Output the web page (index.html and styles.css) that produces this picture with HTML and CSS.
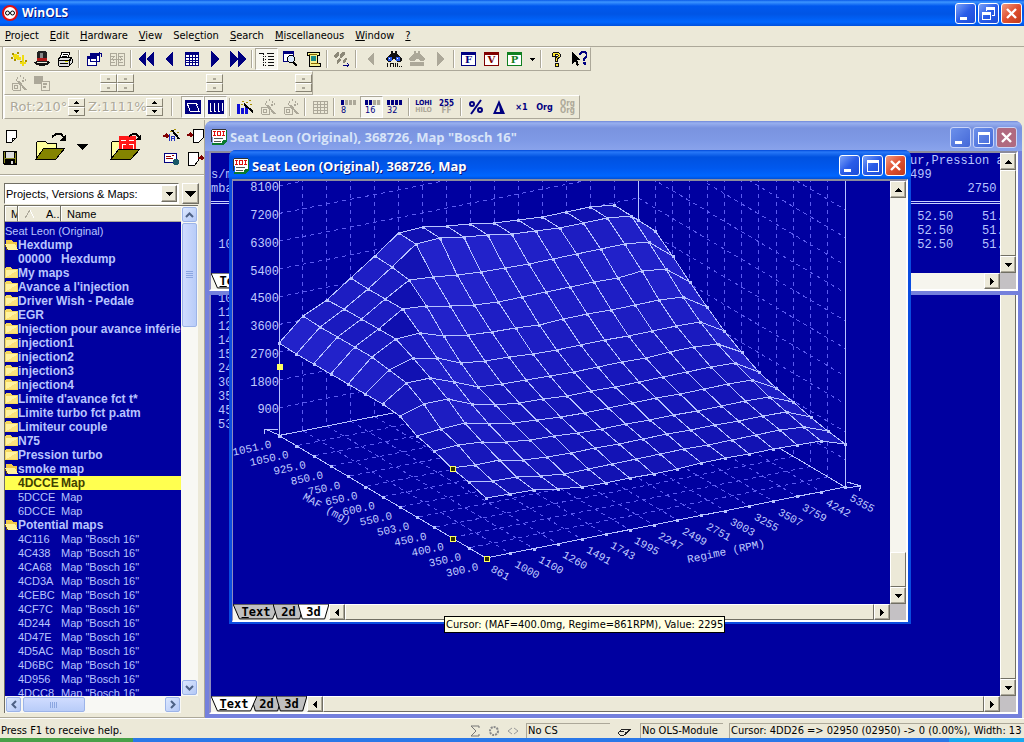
FILE: index.html
```html
<!DOCTYPE html>
<html lang="en">
<head>
    <meta charset="UTF-8">
    <meta name="viewport" content="width=device-width, initial-scale=1.0">
    <title>WinOLS</title>
    <link rel="stylesheet" href="styles.css">
</head>
<body>
    <!-- Icon sprites -->
    <svg class="sprites" aria-hidden="true">
        <symbol id="up" viewBox="0 0 7 4"><path d="M3 0h1v1h1v1h1v1h1v1H0V3h1V2h1V1h1z"/></symbol>
        <symbol id="down" viewBox="0 0 7 4"><path d="M0 0h7v1H6v1H5v1H4v1H3V3H2V2H1V1H0z"/></symbol>
        <symbol id="down-big" viewBox="0 0 11 6"><path d="M0 0h11v1h-1v1H9v1H8v1H7v1H6v1H5V5H4V4H3V3H2V2H1V1H0z"/></symbol>
        <symbol id="left" viewBox="0 0 4 7"><path d="M4 0v7H3V6H2V5H1V4H0V3h1V2h1V1h1V0z"/></symbol>
        <symbol id="right" viewBox="0 0 4 7"><path d="M0 0v7h1V6h1V5h1V4h1V3H3V2H2V1H1V0z"/></symbol>
        <symbol id="chev-up" viewBox="0 0 9 6"><path d="M1 5l3.500-3.500L8 5" fill="none" stroke="#4d6185" stroke-width="2"/></symbol>
        <symbol id="chev-down" viewBox="0 0 9 6"><path d="M1 1l3.500 3.500L8 1" fill="none" stroke="#4d6185" stroke-width="2"/></symbol>
        <symbol id="chev-left" viewBox="0 0 6 9"><path d="M5 1L1.500 4.500L5 8" fill="none" stroke="#4d6185" stroke-width="2"/></symbol>
        <symbol id="chev-right" viewBox="0 0 6 9"><path d="M1 1l3.500 3.500L1 8" fill="none" stroke="#4d6185" stroke-width="2"/></symbol>
        <symbol id="folder" viewBox="0 0 13 13">
            <path d="M0 3l1-2h5l1 2h6v9H0z" fill="#f4d860"/>
            <path d="M1 4h11v7H1z" fill="#fff3a0"/>
            <path d="M1 11L12 5v6z" fill="#fbe27c"/>
        </symbol>
        <symbol id="folder-open" viewBox="0 0 13 13">
            <path d="M1 12V2h6l1 2h4v8z" fill="#f0c848"/>
            <path d="M0 6h10l3 6H3z" fill="#fff29a"/>
            <path d="M0 6l3 6H1z" fill="#6a5010"/>
        </symbol>
        <symbol id="doc" viewBox="0 0 16 16">
            <path d="M1 1h14v11l-3 3H2z" fill="#fff"/>
            <path d="M1 0h14v1H1zM0 1h1v12H0z" fill="#333"/>
            <path d="M15 1h1v11l-4 4H1v-2h10l1-3h3z" fill="#0a7a30"/>
            <path d="M2 2h3v1H4v3h1v1H2V6h1V3H2zM6 2h4v5H6zM7 3v3h2V3zM11 2h3v1h-1v3h1v1h-3V6h1V3h-1z" fill="#e01010" fill-rule="evenodd"/>
            <path d="M3 9h9v1H3zM3 12h7v1H3z" fill="#555"/>
        </symbol>
        <symbol id="min" viewBox="0 0 19 19"><path d="M4 13h7v3H4z" fill="#fff"/></symbol>
        <symbol id="max" viewBox="0 0 19 19"><path d="M4 4h12v12H4zM5 7v8h10V7z" fill="#fff" fill-rule="evenodd"/></symbol>
        <symbol id="restore" viewBox="0 0 19 19"><path d="M7 3h9v9h-3v-1h2V6H8v1H7zM3 8h9v8H3zM4 11v4h7v-4z" fill="#fff" fill-rule="evenodd"/></symbol>
        <symbol id="close" viewBox="0 0 19 19"><path d="M5 5l9 9M14 5l-9 9" stroke="#fff" stroke-width="2.400"/></symbol>
        <symbol id="tab-shape" viewBox="0 0 100 15" preserveAspectRatio="none">
            <path d="M0 0L14 14H86L100 0z" fill="currentColor" stroke="#000" vector-effect="non-scaling-stroke"/>
        </symbol>

        <symbol id="import" viewBox="0 0 16 16">
            <path d="M1 2h2v2H1zM6 1h2v2H6zM0 6h2v2H0zM7 6h2v2H7zM3 8h2v2H3zM9 10h2v2H9zM14 9h2v2h-2z" fill="#a89000"/>
            <path d="M3 3h3v5H3zM2 4h6v2H2zM6 6h4v3H6zM11 4h2v11h-2zM9 11h6v2H9z" fill="#f0dc10"/>
        </symbol>
        <symbol id="hat" viewBox="0 0 16 16">
            <path d="M3 1l2-1h6l2 1v10H3z" fill="#222"/><path d="M6 2h3v5H6z" fill="#888"/>
            <path d="M3 7h10v3H3z" fill="#b01818"/><path d="M0 11l3-1v2h10v-2l3 1-2 3-6 1-6-1z" fill="#111"/>
        </symbol>
        <symbol id="print" viewBox="0 0 16 16">
            <path d="M5 1h8l-2 6H3z" fill="#fff" stroke="#000"/><path d="M6 3h5M5 5h5" stroke="#000"/>
            <path d="M1 8l3-2h10l1 2v4l-3 3H2l-1-2z" fill="#ddd" stroke="#000"/><path d="M1 9h11M3 12h8M12 14V9l3-2" stroke="#000"/><path d="M8 10h3v1H8z" fill="#dd0"/>
        </symbol>
        <symbol id="windows" viewBox="0 0 16 16">
            <path d="M4 3h9v7H4zM1 6h9v8H1z" fill="#fff" stroke="#000080"/><path d="M4 2h9v3H4zM1 5h10v3H1z" fill="#000080"/>
            <path d="M11 2h4v4M15 3l-2-2" fill="none" stroke="#000080"/>
        </symbol>
        <symbol id="compare" viewBox="0 0 16 16">
            <path d="M1 2h6v12H1zM9 2h6v12H9z" fill="none" stroke="#aca899"/><path d="M2 5h4M2 8h12M10 5h4M2 11h4M10 11h4M5 6l-2 2 2 2M11 6l2 2-2 2" fill="none" stroke="#aca899"/>
        </symbol>
        <symbol id="rewind" viewBox="0 0 16 16"><path d="M8 0v16L0 8zM16 0v16L8 8z" fill="#000080"/></symbol>
        <symbol id="back" viewBox="0 0 16 16"><path d="M12 0v16L4 8z" fill="#000080"/></symbol>
        <symbol id="grid" viewBox="0 0 16 16"><path d="M1 1h14v14H1z" fill="#000080"/><path d="M2 4h3v2H2zM6 4h2v2H6zM9 4h2v2H9zM12 4h2v2h-2zM2 7h3v2H2zM6 7h2v2H6zM9 7h2v2H9zM12 7h2v2h-2zM2 10h3v1H2zM6 10h2v1H6zM9 10h2v1H9zM12 10h2v1h-2zM2 12h3v2H2zM6 12h2v2H6zM9 12h2v2H9zM12 12h2v2h-2z" fill="#fff"/></symbol>
        <symbol id="next" viewBox="0 0 16 16"><path d="M4 0v16l8-8z" fill="#000080"/></symbol>
        <symbol id="forward" viewBox="0 0 16 16"><path d="M0 0v16l8-8zM8 0v16l8-8z" fill="#000080"/></symbol>
        <symbol id="treeview" viewBox="0 0 16 16"><path d="M0 2h5M8 2h7M9 5h6M9 8h6M9 11h6M9 14h6" stroke="#111"/><path d="M4 3v12M4 5h4M4 8h4M4 11h4M4 14h4" stroke="#111" stroke-dasharray="1 1"/></symbol>
        <symbol id="search-map" viewBox="0 0 16 16">
            <path d="M1 1h10v9H1z" fill="#fff" stroke="#000080"/><path d="M1 0h11v3H1z" fill="#000080"/>
            <circle cx="9" cy="8" r="3.500" fill="#d8e8ff" stroke="#000"/><path d="M11 11l4 4" stroke="#000" stroke-width="2"/>
        </symbol>
        <symbol id="scroll" viewBox="0 0 16 16">
            <path d="M2 1h12v3h-2v8h3v3H4v-3l1-8H2z" fill="#f4f090" stroke="#000"/><path d="M6 5h5v5H6z" fill="#188888"/><path d="M6 12h8M4 3h8" stroke="#886600"/>
        </symbol>
        <symbol id="steps" viewBox="0 0 16 16">
            <path d="M0 5l3-4h2v3L3 7H1zM6 4l2-3h3v2L8 7H6zM3 9l3-2 1 2-3 4H3zM9 9l3-3 1 2-2 4H9z" fill="#8c8878"/><path d="M9 14h6M13 12l2 2-2 2" fill="none" stroke="#000080"/>
        </symbol>
        <symbol id="prev-off" viewBox="0 0 16 16"><path d="M11 1v14L4 8z" fill="#aca899"/></symbol>
        <symbol id="next-off" viewBox="0 0 16 16"><path d="M5 1v14l7-7z" fill="#aca899"/></symbol>
        <symbol id="binoc" viewBox="0 0 16 16">
            <path d="M5 0h2v2h2V0h2v3l5 4v2l-2 2h-3L9 8H7l-2 3H2L0 9V7l5-4z" fill="#111"/><circle cx="4" cy="8" r="2.500" fill="#2858e8"/><circle cx="12" cy="8" r="2.500" fill="#2858e8"/>
            <path d="M3 7h1M11 7h1" stroke="#fff"/><path d="M1 12v4M4 12v4M4 12h3v4H4M9 12v4M11 12v4M13 15h1M15 15h1" fill="none" stroke="#111"/>
        </symbol>
        <symbol id="binoc-off" viewBox="0 0 16 16"><path d="M5 0h2v2h2V0h2v3l5 4v2l-2 1h-3L9 8H7l-2 2H2L0 9V7l5-4zM1 11h14v4H1z" fill="#aca899"/></symbol>
        <symbol id="help" viewBox="0 0 16 16"><path d="M4 5V3l2-2h4l2 2v3L9 8v2H7V7l3-2V4L9 3H7v2zM7 12h3v3H7z" fill="#ffe830" stroke="#111"/></symbol>
        <symbol id="whats" viewBox="0 0 16 16"><path d="M1 1v12l3-3 2 5 2-1-2-5h4z" fill="#000"/><path d="M9 4V3l2-2h3l2 2v2l-3 3v2M12 12h2v2" fill="none" stroke="#000080" stroke-width="2"/></symbol>
        <symbol id="wand-off" viewBox="0 0 16 16"><path d="M7 6l8 9" stroke="#aca899" stroke-width="2"/><path d="M6 3h1M9 1h1M12 3h1M14 5h1M5 5h1M11 6h2" fill="none" stroke="#aca899" stroke-width="2"/><path d="M1 8h6l2 2v5H2l-1-2zM3 10h3v3H3z" fill="none" stroke="#aca899"/></symbol>
        <symbol id="layers-off" viewBox="0 0 16 16"><path d="M0 1h9v8H0z" fill="#aca899"/><path d="M7 6h8v9H7z" fill="#ece9d8" stroke="#aca899"/><path d="M9 9h4M9 12h3" stroke="#aca899" stroke-width="2"/></symbol>
        <symbol id="view3d" viewBox="0 0 16 16"><path d="M0 1h16v14H0z" fill="#000080"/><path d="M2 4h9l3 8H5zM2 6h2M11 4l2 2" fill="none" stroke="#fff"/></symbol>
        <symbol id="view2d" viewBox="0 0 16 16"><path d="M0 1h16v14H0z" fill="#000080"/><path d="M2 4v8h2M6 4v8h2M10 4v8h2M14 4v8" fill="none" stroke="#fff"/></symbol>
        <symbol id="bars-wand" viewBox="0 0 16 16"><path d="M0 5h3v10H0zM4 9h3v6H4zM8 7h3v8H8z" fill="#1010d8"/><path d="M7 5l9 8" stroke="#000" stroke-width="2"/><path d="M5 2h2M9 3h2M12 1h2M13 5h2M4 5h2" stroke="#a89000"/></symbol>
        <symbol id="grid-off" viewBox="0 0 16 16"><path d="M1 2h14v12H1zM1 5h14M1 8h14M1 11h14M5 2v12M8 2v12M12 2v12" fill="none" stroke="#aca899"/></symbol>
        <symbol id="delta" viewBox="0 0 16 16"><path d="M8 1l6 14H2zM8 6l-3 7h4z" fill="#000080" fill-rule="evenodd"/></symbol>
        <symbol id="percent" viewBox="0 0 16 16"><path d="M13 1L3 15" stroke="#000080" stroke-width="2"/><circle cx="4" cy="5" r="2" fill="none" stroke="#000080" stroke-width="2"/><circle cx="12" cy="11" r="2" fill="none" stroke="#000080" stroke-width="2"/></symbol>

        <symbol id="new" viewBox="0 0 12 14"><path d="M1 1h10v8l-4 4H1z" fill="#fff" stroke="#000"/><path d="M11 9H7v4" fill="none" stroke="#000"/></symbol>
        <symbol id="save" viewBox="0 0 14 14"><path d="M0 0h14v14H1L0 13z" fill="#000"/><path d="M1 1h1v11H1zM12 2h1v10h-1zM2 7h10v1H2z" fill="#8a8a20"/><path d="M3 1h8v6H3zM8 10h2v3H8z" fill="#ddd"/></symbol>
        <symbol id="open" viewBox="0 0 32 30">
            <path d="M1 27V11l2-2h7l2 2h9v6" fill="#ffff9c" stroke="#000"/><path d="M1 27l8-11h21l-9 11z" fill="#848400" stroke="#000"/>
            <path d="M17 5l4-3h5l4 5" fill="none" stroke="#000" stroke-width="2"/><path d="M31 2v7h-7z" fill="#000"/>
        </symbol>
        <symbol id="open-chip" viewBox="0 0 32 30">
            <path d="M1 27V11l2-2h6v4" fill="#ffff9c" stroke="#000"/><path d="M9 4h17v15H9z" fill="#ff1818"/>
            <path d="M11 8h5M19 8h5M12 17v-5h4M19 12h4v5" fill="none" stroke="#fff"/>
            <path d="M1 27l8-10h21l-9 10z" fill="#848400" stroke="#000"/>
            <path d="M19 4l4-2h3l4 4" fill="none" stroke="#000" stroke-width="2"/><path d="M31 2v6h-6z" fill="#000"/>
        </symbol>
        <symbol id="wizard" viewBox="0 0 17 15"><path d="M0 8h4M3 6l2 2-2 2" fill="none" stroke="#800000" stroke-width="2"/><path d="M6 6v7M8 13V8h3v5M8 10h3" fill="none" stroke="#2030c0"/><path d="M9 2l7 9" stroke="#000" stroke-width="2"/><path d="M7 3h2M11 1h2M14 4h2" stroke="#a89000"/></symbol>
        <symbol id="doc-in" viewBox="0 0 17 15"><path d="M6 1h10v9l-4 4H6z" fill="#fff" stroke="#000"/><path d="M0 7h5M3 5l2 2-2 2" fill="none" stroke="#800000" stroke-width="2"/></symbol>
        <symbol id="send" viewBox="0 0 17 15"><path d="M1 2h12v9H1z" fill="#fff" stroke="#000080"/><path d="M3 5h5M3 7h7M9 4h2" stroke="#900"/><circle cx="13" cy="11" r="3" fill="#185868"/></symbol>
        <symbol id="doc-out" viewBox="0 0 17 15"><path d="M1 1h10v9l-3 4H1z" fill="#fff" stroke="#000"/><path d="M11 7h5M14 5l2 2-2 2" fill="none" stroke="#800000" stroke-width="2"/></symbol>
    </svg>

    <header class="titlebar">
        <svg class="app-icon" viewBox="0 0 16 16"><circle cx="8" cy="8" r="7" fill="#fff" stroke="#e01010" stroke-width="2"/><circle cx="5.500" cy="8" r="2" fill="none" stroke="#000"/><circle cx="10.500" cy="8" r="2" fill="none" stroke="#000"/></svg>
        <h1>WinOLS</h1>
        <button class="cap" aria-label="Minimize"><svg><use href="#min"/></svg></button>
        <button class="cap" aria-label="Restore"><svg><use href="#restore"/></svg></button>
        <button class="cap red" aria-label="Close"><svg><use href="#close"/></svg></button>
    </header>

    <nav class="menu">
        <a href="#"><u>P</u>roject</a>
        <a href="#"><u>E</u>dit</a>
        <a href="#"><u>H</u>ardware</a>
        <a href="#"><u>V</u>iew</a>
        <a href="#">Sele<u>c</u>tion</a>
        <a href="#"><u>S</u>earch</a>
        <a href="#"><u>M</u>iscellaneous</a>
        <a href="#"><u>W</u>indow</a>
        <a href="#"><u>?</u></a>
    </nav>

    <div class="toolbar">
        <button aria-label="Import"><svg><use href="#import"/></svg></button>
        <button aria-label="Magic"><svg><use href="#hat"/></svg></button>
        <button aria-label="Print"><svg><use href="#print"/></svg></button>
        <i class="sep"></i>
        <button aria-label="Windows"><svg><use href="#windows"/></svg></button>
        <button aria-label="Compare" disabled><svg><use href="#compare"/></svg></button>
        <i class="sep"></i>
        <button aria-label="First"><svg><use href="#rewind"/></svg></button>
        <button aria-label="Previous"><svg><use href="#back"/></svg></button>
        <button aria-label="Map list"><svg><use href="#grid"/></svg></button>
        <button aria-label="Next"><svg><use href="#next"/></svg></button>
        <button aria-label="Last"><svg><use href="#forward"/></svg></button>
        <i class="sep"></i>
        <button class="pressed" aria-label="Tree"><svg><use href="#treeview"/></svg></button>
        <button aria-label="Overview"><svg><use href="#search-map"/></svg></button>
        <button aria-label="Script"><svg><use href="#scroll"/></svg></button>
        <i class="sep"></i>
        <button aria-label="Steps"><svg><use href="#steps"/></svg></button>
        <i class="sep"></i>
        <button aria-label="Find previous" disabled><svg><use href="#prev-off"/></svg></button>
        <button aria-label="Find"><svg><use href="#binoc"/></svg></button>
        <button aria-label="Find again" disabled><svg><use href="#binoc-off"/></svg></button>
        <button aria-label="Find next" disabled><svg><use href="#next-off"/></svg></button>
        <i class="sep"></i>
        <button><span class="letter">F</span></button>
        <button><span class="letter maroon">V</span></button>
        <button><span class="letter green">P</span></button>
        <button class="narrow" aria-label="More"><svg class="arrow-sm"><use href="#down"/></svg></button>
        <i class="sep"></i>
        <button aria-label="Help"><svg><use href="#help"/></svg></button>
        <button aria-label="What's this"><svg><use href="#whats"/></svg></button>
    </div>

    <div class="toolbar">
        <button aria-label="Edit map" disabled><svg><use href="#wand-off"/></svg></button>
        <button aria-label="Copy map" disabled><svg><use href="#layers-off"/></svg></button>
        <span class="blank"></span>
        <span class="spin off"><button aria-label="Up" disabled></button><button aria-label="Down" disabled></button></span>
        <span class="spin off"><button aria-label="Up" disabled></button><button aria-label="Down" disabled></button></span>
        <span class="blank wide"></span>
        <span class="spin off"><button aria-label="Up" disabled></button><button aria-label="Down" disabled></button></span>
        <span class="blank wide"></span>
        <span class="spin off"><button aria-label="Up" disabled></button><button aria-label="Down" disabled></button></span>
    </div>

    <div class="toolbar last">
        <span class="readout">Rot:210°</span>
        <span class="spin"><button aria-label="Rotate up"><svg><use href="#up"/></svg></button><button aria-label="Rotate down"><svg><use href="#down"/></svg></button></span>
        <span class="readout">Z:1111%</span>
        <span class="spin"><button aria-label="Zoom in"><svg><use href="#up"/></svg></button><button aria-label="Zoom out"><svg><use href="#down"/></svg></button></span>
        <i class="sep big"></i>
        <button class="pressed" aria-label="3d"><svg><use href="#view3d"/></svg></button>
        <button class="pressed" aria-label="2d"><svg><use href="#view2d"/></svg></button>
        <i class="sep"></i>
        <button aria-label="Map wizard"><svg><use href="#bars-wand"/></svg></button>
        <button aria-label="Wizard" disabled><svg><use href="#wand-off"/></svg></button>
        <button aria-label="Wizard" disabled><svg><use href="#wand-off"/></svg></button>
        <i class="sep"></i>
        <button aria-label="Grid" disabled><svg><use href="#grid-off"/></svg></button>
        <i class="sep"></i>
        <button class="bits"><i class="b1"></i>8</button>
        <button class="bits pressed"><i class="b2"></i>16</button>
        <button class="bits"><i class="b4"></i>32</button>
        <i class="sep"></i>
        <button class="stack"><b>LOHI</b><b class="dim">HILO</b></button>
        <button class="stack num"><b>255</b><b class="dim">FF</b></button>
        <i class="sep"></i>
        <button aria-label="Percent"><svg class="smooth"><use href="#percent"/></svg></button>
        <button aria-label="Difference"><svg class="smooth"><use href="#delta"/></svg></button>
        <button class="word">×1</button>
        <button class="word">Org</button>
        <button class="stack off"><b class="dim">Org</b><b class="dim">Org</b></button>
    </div>

    <main>
        <aside>
            <div class="actions">
                <div class="pair">
                    <button aria-label="New"><svg class="i-new"><use href="#new"/></svg></button>
                    <button aria-label="Save"><svg class="i-save"><use href="#save"/></svg></button>
                </div>
                <button class="big" aria-label="Open"><svg><use href="#open"/></svg></button>
                <button class="big-arrow" aria-label="Recent"><svg><use href="#down-big"/></svg></button>
                <button class="big" aria-label="Open from chip"><svg><use href="#open-chip"/></svg></button>
                <div class="quad">
                    <button aria-label="Wizard"><svg><use href="#wizard"/></svg></button>
                    <button aria-label="Import file"><svg><use href="#doc-in"/></svg></button>
                    <button aria-label="Send"><svg><use href="#send"/></svg></button>
                    <button aria-label="Export file"><svg><use href="#doc-out"/></svg></button>
                </div>
            </div>

            <div class="filter">
                <div class="combo">
                    <select aria-label="Show"><option>Projects, Versions &amp; Maps:</option></select>
                    <span class="raised"><svg><use href="#down"/></svg></span>
                </div>
                <button class="raised more" aria-label="Options"><svg><use href="#down-big"/></svg></button>
            </div>

            <div class="browser">
                <div class="list">
                    <div class="head"><span class="c1">M</span><span class="c2"><svg viewBox="0 0 9 8"><path d="M0 8L5 0" stroke="#aca899" fill="none"/><path d="M5 0l4 8H0" stroke="#fff" fill="none"/></svg>A..</span><span class="c3">Name</span></div>
                    <ul class="tree">
                        <li class="root">Seat Leon (Original)</li>
                        <li class="dir"><svg><use href="#folder-open"/></svg>Hexdump</li>
                        <li class="item bold"><span>00000</span>Hexdump</li>
                        <li class="dir"><svg><use href="#folder"/></svg>My maps</li>
                        <li class="dir"><svg><use href="#folder"/></svg>Avance a l'injection</li>
                        <li class="dir"><svg><use href="#folder"/></svg>Driver Wish - Pedale</li>
                        <li class="dir"><svg><use href="#folder"/></svg>EGR</li>
                        <li class="dir"><svg><use href="#folder"/></svg>Injection pour avance inférie</li>
                        <li class="dir"><svg><use href="#folder"/></svg>injection1</li>
                        <li class="dir"><svg><use href="#folder"/></svg>injection2</li>
                        <li class="dir"><svg><use href="#folder"/></svg>injection3</li>
                        <li class="dir"><svg><use href="#folder"/></svg>injection4</li>
                        <li class="dir"><svg><use href="#folder"/></svg>Limite d'avance fct t*</li>
                        <li class="dir"><svg><use href="#folder"/></svg>Limite turbo fct p.atm</li>
                        <li class="dir"><svg><use href="#folder"/></svg>Limiteur couple</li>
                        <li class="dir"><svg><use href="#folder"/></svg>N75</li>
                        <li class="dir"><svg><use href="#folder"/></svg>Pression turbo</li>
                        <li class="dir"><svg><use href="#folder-open"/></svg>smoke map</li>
                        <li class="item bold selected"><span>4DCCE</span>Map</li>
                        <li class="item"><span>5DCCE</span>Map</li>
                        <li class="item"><span>6DCCE</span>Map</li>
                        <li class="dir"><svg><use href="#folder-open"/></svg>Potential maps</li>
                        <li class="item"><span>4C116</span>Map "Bosch 16"</li>
                        <li class="item"><span>4C438</span>Map "Bosch 16"</li>
                        <li class="item"><span>4CA68</span>Map "Bosch 16"</li>
                        <li class="item"><span>4CD3A</span>Map "Bosch 16"</li>
                        <li class="item"><span>4CEBC</span>Map "Bosch 16"</li>
                        <li class="item"><span>4CF7C</span>Map "Bosch 16"</li>
                        <li class="item"><span>4D244</span>Map "Bosch 16"</li>
                        <li class="item"><span>4D47E</span>Map "Bosch 16"</li>
                        <li class="item"><span>4D5AC</span>Map "Bosch 16"</li>
                        <li class="item"><span>4D6BC</span>Map "Bosch 16"</li>
                        <li class="item"><span>4D956</span>Map "Bosch 16"</li>
                        <li class="item"><span>4DCC8</span>Map "Bosch 16"</li>
                    </ul>
                </div>
                <div class="xp-v">
                    <button aria-label="Scroll up"><svg><use href="#chev-up"/></svg></button>
                    <div class="thumb"></div>
                    <button class="end" aria-label="Scroll down"><svg><use href="#chev-down"/></svg></button>
                </div>
                <div class="xp-h">
                    <button aria-label="Scroll left"><svg><use href="#chev-left"/></svg></button>
                    <div class="thumb"></div>
                    <button class="end" aria-label="Scroll right"><svg><use href="#chev-right"/></svg></button>
                </div>
            </div>
        </aside>

        <section class="desktop">
            <div class="window win-hex">
                <div class="body">
                    <pre class="view">10
11
12
14
15
24
30
35
45
53</pre>
                    <div class="vscroll">
                        <div class="thumb fill"></div>
                        <button class="raised" aria-label="Scroll down"><svg><use href="#down"/></svg></button>
                    </div>
                    <div class="tabs">
                        <button class="tab text on"><svg><use href="#tab-shape"/></svg><span><u>T</u>ext</span></button>
                        <button class="tab"><svg><use href="#tab-shape"/></svg><span>2d</span></button>
                        <button class="tab"><svg><use href="#tab-shape"/></svg><span>3d</span></button>
                        <button class="raised arrow" aria-label="Scroll left"><svg class="side"><use href="#left"/></svg></button>
                        <div class="thumb"></div>
                        <button class="raised arrow" aria-label="Scroll right"><svg class="side"><use href="#right"/></svg></button>
                    </div>
                    <div class="corner"></div>
                </div>
            </div>

            <div class="window win-bosch">
                <div class="caption">
                    <svg class="doc"><use href="#doc"/></svg>
                    <h2>Seat Leon (Original), 368726, Map "Bosch 16"</h2>
                    <button class="cap" aria-label="Minimize"><svg><use href="#min"/></svg></button>
                    <button class="cap" aria-label="Maximize"><svg><use href="#max"/></svg></button>
                    <button class="cap red" aria-label="Close"><svg><use href="#close"/></svg></button>
                </div>
                <div class="body">
                    <div class="view split">
<pre>
s/min
mbar

   7
   9
 10</pre>
<pre>ur,Pression at
499
        2750

 52.50    51.
 52.50    51.
 52.50    51.</pre>
                    </div>
                    <div class="vscroll">
                        <button class="raised" aria-label="Scroll up"><svg><use href="#up"/></svg></button>
                        <div class="thumb fill"></div>
                        <button class="raised" aria-label="Scroll down"><svg><use href="#down"/></svg></button>
                    </div>
                    <div class="tabs">
                        <button class="tab text on"><svg><use href="#tab-shape"/></svg><span><u>T</u>ext</span></button>
                        <div class="track"></div>
                        <button class="raised arrow" aria-label="Scroll right"><svg class="side"><use href="#right"/></svg></button>
                    </div>
                    <div class="corner"></div>
                </div>
            </div>

            <div class="window win-map active">
                <div class="caption">
                    <svg class="doc"><use href="#doc"/></svg>
                    <h2>Seat Leon (Original), 368726, Map</h2>
                    <button class="cap" aria-label="Minimize"><svg><use href="#min"/></svg></button>
                    <button class="cap" aria-label="Maximize"><svg><use href="#max"/></svg></button>
                    <button class="cap red" aria-label="Close"><svg><use href="#close"/></svg></button>
                </div>
                <div class="body">
                    <svg class="view plot" id="plot" viewBox="233 181 657 423" preserveAspectRatio="xMinYMin slice"></svg>
                    <div class="vscroll">
                        <button class="raised" aria-label="Scroll up"><svg><use href="#up"/></svg></button>
                        <div class="track"></div>
                        <div class="thumb"></div>
                        <button class="raised" aria-label="Scroll down"><svg><use href="#down"/></svg></button>
                    </div>
                    <div class="tabs">
                        <button class="tab text"><svg><use href="#tab-shape"/></svg><span><u>T</u>ext</span></button>
                        <button class="tab"><svg><use href="#tab-shape"/></svg><span>2d</span></button>
                        <button class="tab on"><svg><use href="#tab-shape"/></svg><span>3d</span></button>
                        <button class="raised arrow" aria-label="Scroll left"><svg class="side"><use href="#left"/></svg></button>
                        <div class="thumb"></div>
                        <button class="raised arrow" aria-label="Scroll right"><svg class="side"><use href="#right"/></svg></button>
                    </div>
                    <div class="corner"></div>
                </div>
            </div>

            <div class="tooltip">Cursor: (MAF=400.0mg, Regime=861RPM), Value: 2295</div>
        </section>
    </main>

    <footer class="status">
        <span class="msg">Press F1 to receive help.</span>
        <svg class="st" viewBox="0 0 12 12"><path d="M10 3V1H2l5 5-5 5h8V9" fill="none" stroke="#777"/></svg>
        <svg class="st" viewBox="0 0 12 12"><circle cx="6" cy="6" r="4" fill="none" stroke="#888" stroke-width="2" stroke-dasharray="2 1"/></svg>
        <svg class="st" viewBox="0 0 12 12"><path d="M5 3L1 6l4 3M7 3l4 3-4 3" fill="none" stroke="#999"/></svg>
        <span class="pane cs">No CS</span>
        <svg class="hand" viewBox="0 0 16 12"><path d="M1 8l4-4h9l-3 3h-3l2 1-3 2H3zM5 4l-2 2h4M10 7l4-3" fill="none" stroke="#222"/></svg>
        <span class="pane ols">No OLS-Module</span>
        <span class="pane cursor">Cursor: 4DD26 =&gt; 02950 (02950) -&gt; 0 (0.00%), Width: 13</span>
    </footer>
    <div class="taskbar"><i></i><b></b></div>

    <script>
        // Axis labels
        const maf = ['300.0', '350.0', '400.0', '450.0', '503.0', '550.0', '600.0', '650.0', '750.0', '850.0', '925.0', '1050.0', '1051.0'];
        const rpm = [861, 1000, 1100, 1260, 1491, 1743, 1995, 2247, 2499, 2751, 3003, 3255, 3507, 3759, 4242, 5355];

        // Projected height of the surface, one row for each MAF step, front row first
        const surface = [
            [498, 494, 490, 489, 487, 483, 478, 474, 469, 463, 458, 454, 449, 445, 441, 444],
            [482, 481, 477, 476, 474, 469, 464, 459, 454, 449, 445, 440, 435, 430, 427, 431],
            [468, 465, 460, 460, 457, 453, 448, 444, 439, 434, 430, 425, 421, 416, 412, 417],
            [451, 445, 442, 442, 440, 436, 433, 429, 424, 420, 415, 411, 406, 401, 397, 402],
            [436, 429, 423, 424, 423, 420, 417, 413, 408, 403, 398, 394, 389, 384, 380, 388],
            [416, 404, 399, 404, 405, 403, 399, 396, 391, 387, 382, 377, 372, 367, 363, 372],
            [404, 383, 378, 382, 387, 384, 380, 376, 372, 367, 362, 358, 352, 347, 344, 352],
            [394, 370, 358, 358, 363, 361, 357, 354, 350, 345, 340, 336, 331, 326, 322, 331],
            [384, 357, 339, 333, 336, 335, 332, 328, 325, 319, 314, 310, 305, 300, 297, 307],
            [374, 347, 329, 309, 306, 306, 305, 302, 297, 292, 287, 282, 278, 271, 269, 282],
            [364, 337, 319, 299, 280, 277, 275, 272, 268, 264, 259, 254, 249, 244, 242, 256],
            [354, 327, 309, 289, 267, 244, 238, 237, 235, 234, 231, 228, 223, 218, 216, 231],
            [343, 316, 300, 278, 256, 233, 227, 226, 224, 223, 220, 217, 212, 207, 205, 220]
        ];

        const plot = document.getElementById('plot');
        const I = rpm.length - 1;
        const J = maf.length - 1;
        const level = 27.75; // height of 900 units

        function floorPoint(i, j) {
            return [486 + i * 359 / I - j * 207 / J, 558 - i * 71 / I - j * 122.5 / J];
        }

        function surfacePoint(i, j) {
            return [floorPoint(i, j)[0], surface[j][i]];
        }

        function add(name, attrs, text) {
            const el = document.createElementNS('http://www.w3.org/2000/svg', name);
            for (const key in attrs) el.setAttribute(key, attrs[key]);
            if (text !== undefined) el.textContent = text;
            plot.appendChild(el);
        }

        function line(a, b, cls) {
            add('path', { d: 'M' + a + 'L' + b, class: cls });
        }

        function dot(p, cls) {
            const r = cls ? 2 : 1;
            add('rect', { x: Math.round(p[0]) - r, y: Math.round(p[1]) - r, width: 2 * r + 1, height: 2 * r + 1, class: cls || 'dot' });
        }

        // Walls and floor
        const left = floorPoint(0, J), back = floorPoint(I, J), right = floorPoint(I, 0), front = floorPoint(0, 0);
        for (let i = 1; i < I; i++) {
            const p = floorPoint(i, J);
            line([p[0], 170], p, 'dash');
            line(p, floorPoint(i, 0), 'dash');
        }
        for (let j = 1; j < J; j++) {
            const p = floorPoint(I, j);
            line([p[0], 170], p, 'dash');
            line(p, floorPoint(0, j), 'dash');
        }
        for (let k = 1; k < 13; k++) {
            line([left[0], left[1] - k * level], [back[0], back[1] - k * level], 'dash');
            line([back[0], back[1] - k * level], [right[0], right[1] - k * level], 'dash');
            if (k < 10) {
                add('text', { x: 279, y: 441 - k * level, class: 'scale' }, k * 900);
            }
        }
        line([left[0], 170], left, 'line');
        line([back[0], 170], back, 'line');
        line([right[0], 170], right, 'line');
        line(left, back, 'line');
        line(back, right, 'line');
        line(front, left, 'line');
        line(front, right, 'line');
        add('path', { d: 'M278 430L265 429L264 434M265 429L279 435', class: 'line' });
        add('path', { d: 'M847 482L861 486L859 491M861 486L845 488', class: 'line' });

        // Surface, back to front
        for (let j = J - 1; j >= 0; j--) {
            for (let i = 0; i < I; i++) {
                const q = [surfacePoint(i, j), surfacePoint(i + 1, j), surfacePoint(i + 1, j + 1), surfacePoint(i, j + 1)];
                const di = Math.abs(surface[j][i] - surface[j][i + 1] - 5);
                const dj = Math.abs(surface[j][i] - surface[j + 1][i] - 10);
                const t = Math.min(1, (di + dj) / 22);
                const c = Math.round(14 + 20 * t);
                add('path', { d: 'M' + q.join('L') + 'Z', class: 'line', fill: `rgb(${c},${c},${Math.round(174 + 28 * t)})` });
            }
        }
        for (let j = 0; j <= J; j++) {
            for (let i = 0; i <= I; i++) dot(surfacePoint(i, j));
        }

        // Axis ticks and labels
        for (let j = 0; j <= J; j++) {
            const p = floorPoint(0, j);
            dot(p);
            add('text', { transform: `translate(${p[0] - 7} ${p[1] + 12}) rotate(-12)`, class: 'maf' }, maf[j]);
        }
        for (let i = 0; i <= I; i++) {
            const p = floorPoint(i, 0);
            dot(p);
            add('text', { transform: `translate(${p[0] + 4} ${p[1] + 13}) rotate(29)`, class: 'rpm' }, rpm[i]);
        }
        add('text', { transform: 'translate(302 499) rotate(29)', class: 'rpm' }, 'MAF (mg)');
        add('text', { transform: 'translate(688 563) rotate(-12)', class: 'rpm' }, 'Regime (RPM)');

        // Cursor
        dot([279, 366], 'mark full');
        dot(floorPoint(0, 2), 'mark');
        dot(surfacePoint(0, 2), 'mark');
        dot(front, 'mark');
    </script>
</body>
</html>
```
FILE: styles.css
```css
* {
    box-sizing: border-box;
}

body {
    margin: 0;
    height: 100vh;
    display: flex;
    flex-direction: column;
    overflow: hidden;
    background: #ece9d8;
    color: #000;
    font-family: "DejaVu Sans Condensed", "DejaVu Sans", sans-serif;
    font-size: 11px;
    line-height: 14px;
}

svg {
    display: block;
    flex: none;
    shape-rendering: crispEdges;
}

button {
    display: flex;
    align-items: center;
    justify-content: center;
    flex: none;
    margin: 0;
    padding: 0;
    border: 0;
    background: none;
    color: #000;
    font: inherit;
}

.sprites {
    position: absolute;
    width: 0;
    height: 0;
}

/* Title bars */
.titlebar {
    display: flex;
    align-items: center;
    gap: 2px;
    height: 26px;
    flex: none;
    padding: 0 2px;
    background: linear-gradient(#0a5ae8, #3d95ff 2px, #0058ee 6px, #0055e5 14px, #0066ff 22px, #0050dd);
}

.app-icon {
    width: 16px;
    height: 16px;
    shape-rendering: auto;
}

h1,
h2 {
    flex: 1;
    margin: 0;
    overflow: hidden;
    color: #fff;
    font-family: "Open Sans", sans-serif;
    font-size: 12px;
    line-height: 20px;
    font-weight: bold;
    white-space: nowrap;
    text-shadow: 1px 1px #0a1883;
}

h1 {
    padding-left: 2px;
}

h2 {
    font-size: 13px;
}

.cap {
    width: 21px;
    height: 21px;
    border: 1px solid #fff;
    border-radius: 3px;
    background: linear-gradient(135deg, #7ba2f8, #2a5ce8 50%, #1c4cd8);
}

.cap svg {
    width: 19px;
    height: 19px;
    shape-rendering: auto;
}

.cap.red {
    background: linear-gradient(135deg, #f09a80, #e05030 50%, #c03a1a);
}

/* Menu and toolbars */
.menu {
    display: flex;
    gap: 11px;
    height: 21px;
    flex: none;
    padding: 3px 5px 0;
    border-bottom: 1px solid #aca899;
}

.menu a {
    color: #000;
    text-decoration: none;
}

.toolbar {
    display: flex;
    align-items: center;
    align-self: flex-start;
    height: 24px;
    flex: none;
    padding-left: 2px;
    margin-left: 4px;
    border: 1px solid #fff;
    border-right-color: #aca899;
    border-bottom-color: #aca899;
    box-shadow: -1px 0 #fff, -2px 0 #aca899;
}

.toolbar.last {
    margin-bottom: 1px;
}

.toolbar > button {
    width: 23px;
    height: 22px;
}

.toolbar > button svg {
    width: 16px;
    height: 16px;
}

.toolbar > button .smooth {
    shape-rendering: auto;
}

.toolbar > .narrow {
    width: 12px;
}

.toolbar > button .arrow-sm {
    width: 5px;
    height: 3px;
}

.toolbar .pressed {
    border: 1px solid #fff;
    border-top-color: #aca899;
    border-left-color: #aca899;
    background: #f8f7f0;
}

.sep {
    width: 6px;
    height: 18px;
    flex: none;
    background: linear-gradient(90deg, transparent 2px, #aca899 2px, #aca899 3px, #fff 3px, #fff 4px, transparent 4px);
}

.sep.big {
    margin: 0 6px;
}

.letter {
    width: 15px;
    height: 14px;
    border: 1px solid #000080;
    border-top-width: 3px;
    background: #fff;
    color: #000080;
    font: bold 10px/10px "DejaVu Serif", serif;
    text-align: center;
}

.letter.maroon {
    border-color: #800000;
    color: #800000;
}

.letter.green {
    border-color: #108020;
    color: #108020;
}

.blank {
    width: 47px;
}

.blank.wide {
    width: 72px;
}

.spin {
    width: 17px;
    display: flex;
    flex-direction: column;
}

.spin button {
    height: 9px;
    border: 1px solid #fff;
    border-right-color: #888474;
    border-bottom-color: #888474;
}

.spin svg {
    width: 5px;
    height: 3px;
}

.spin.off button::before {
    content: "";
    width: 3px;
    height: 2px;
    background: #aca899;
}

.readout {
    width: 61px;
    padding-left: 3px;
    color: #aca899;
    font-family: "DejaVu Sans", sans-serif;
    font-size: 13px;
    white-space: nowrap;
    text-shadow: 1px 1px #fff;
}

.toolbar .bits {
    flex-direction: column;
    align-items: flex-start;
    padding-left: 4px;
    color: #000080;
    font-size: 9px;
    line-height: 9px;
}

.bits i {
    width: 16px;
    height: 5px;
    margin-bottom: 1px;
    background: repeating-linear-gradient(90deg, #000080 0, #000080 3px, transparent 3px, transparent 4px);
}

.bits .b1 {
    background: repeating-linear-gradient(90deg, transparent 0, transparent 3px, #ece9d8 3px, #ece9d8 4px), linear-gradient(90deg, #000080 4px, #aca899 4px);
}

.bits .b2 {
    background: repeating-linear-gradient(90deg, transparent 0, transparent 3px, #ece9d8 3px, #ece9d8 4px), linear-gradient(90deg, #000080 8px, #aca899 8px);
}

.toolbar .stack {
    flex-direction: column;
    color: #000080;
    font-size: 7px;
    line-height: 7px;
}

.toolbar .num,
.toolbar .off {
    font-size: 8px;
}

.stack .dim {
    color: #aca899;
}

.toolbar .word {
    color: #000080;
    font-size: 9px;
    font-weight: bold;
}

/* Left panel */
main {
    flex: 1;
    min-height: 0;
    display: flex;
}

aside {
    width: 205px;
    flex: none;
    display: flex;
    flex-direction: column;
    padding-bottom: 4px;
    border-right: 1px solid #aca899;
    border-bottom: 1px solid #aca899;
}

.actions {
    display: flex;
    align-items: center;
    height: 55px;
    flex: none;
    padding-left: 3px;
    border-bottom: 1px solid #aca899;
    box-shadow: 0 1px #fff;
}

.pair {
    width: 32px;
    display: grid;
    gap: 8px;
    justify-items: start;
}

.i-new {
    width: 12px;
    height: 14px;
    margin-left: 2px;
}

.i-save {
    width: 14px;
    height: 14px;
}

.big svg {
    width: 32px;
    height: 30px;
}

.big-arrow {
    width: 43px;
    padding-right: 12px;
}

.big-arrow svg {
    width: 11px;
    height: 6px;
}

.quad {
    display: grid;
    grid-template-columns: 24px 17px;
    gap: 8px 0;
    margin-left: auto;
    justify-items: start;
}

.quad svg {
    width: 17px;
    height: 15px;
}

.filter {
    display: flex;
    gap: 3px;
    flex: none;
    padding: 8px 5px 0 4px;
}

.combo {
    position: relative;
    flex: 1;
    height: 21px;
    border: 1px solid #716f64;
    border-right-color: #fff;
    border-bottom-color: #fff;
    background: #fff;
}

select {
    width: 100%;
    height: 19px;
    padding: 0 0 0 1px;
    border: 0;
    appearance: none;
    background: #fff;
    color: #000;
    font-family: "Liberation Sans", sans-serif;
    font-size: 11px;
}

/* The arrow lies over the select's right end */
.combo .raised {
    position: absolute;
    top: 1px;
    right: 1px;
    width: 16px;
    height: 17px;
    pointer-events: none;
}

.raised {
    display: flex;
    align-items: center;
    justify-content: center;
    background: #ece9d8;
    border: 1px solid #fff;
    border-right-color: #716f64;
    border-bottom-color: #716f64;
    box-shadow: inset -1px -1px #aca899;
}

.raised svg {
    width: 7px;
    height: 4px;
}

.raised svg.side {
    width: 4px;
    height: 7px;
}

.more {
    width: 17px;
    height: 21px;
}

.more svg {
    width: 11px;
    height: 6px;
}

.browser {
    flex: 1;
    min-height: 0;
    display: grid;
    grid-template-columns: 1fr 17px;
    grid-template-rows: 1fr 17px;
    margin: 1px 6px 0 4px;
    border-left: 1px solid #716f64;
    border-top: 1px solid #716f64;
}

.list {
    display: flex;
    flex-direction: column;
    min-width: 0;
    min-height: 0;
    background: #0000a0;
}

.head {
    display: flex;
    height: 16px;
    flex: none;
    background: #ece9d8;
    font-family: "Liberation Sans", sans-serif;
    font-size: 11px;
    line-height: 16px;
}

.head span {
    overflow: hidden;
    border-right: 1px solid #716f64;
    border-bottom: 1px solid #aca899;
    box-shadow: inset 1px 1px #fff;
}

.head .c1 {
    width: 13px;
    padding-left: 6px;
}

.head .c2 {
    width: 43px;
    display: flex;
    align-items: center;
    gap: 12px;
    padding-left: 7px;
}

.head .c2 svg {
    width: 9px;
    height: 8px;
}

.head .c3 {
    flex: 1;
    padding-left: 6px;
    border-right: 0;
}

.tree {
    flex: 1;
    min-height: 0;
    margin: 0;
    padding: 2px 0 0;
    overflow: hidden;
    list-style: none;
    color: #b8c4ff;
    font-family: "Liberation Sans", sans-serif;
    font-size: 11px;
    line-height: 14px;
    white-space: nowrap;
}

.tree li {
    display: flex;
    height: 14px;
}

.tree svg {
    width: 13px;
    height: 13px;
}

.dir,
.bold {
    font-size: 12px;
    font-weight: bold;
}

.item {
    padding-left: 13px;
}

.item span {
    width: 43px;
}

.selected {
    background: #ffff50;
    color: #404000;
}

.xp-v {
    display: flex;
    flex-direction: column;
    gap: 1px;
    padding: 1px;
    background: #f8f8f4;
}

.xp-h {
    display: flex;
    gap: 2px;
    padding: 1px;
    background: #f8f8f4;
}

.xp-v button,
.xp-h button,
.xp-v .thumb,
.xp-h .thumb {
    width: 15px;
    height: 15px;
    border: 1px solid #9cb4e8;
    border-radius: 2px;
    background: linear-gradient(135deg, #dce8ff, #b4c8f6);
}

.xp-v .thumb {
    height: 104px;
    background: repeating-linear-gradient(#8ba6e0 0, #8ba6e0 1px, transparent 1px, transparent 2px) center / 7px 8px no-repeat, linear-gradient(90deg, #d0dcff, #b8ccf8);
}

.xp-h .thumb {
    width: 62px;
    background: repeating-linear-gradient(90deg, #8ba6e0 0, #8ba6e0 1px, transparent 1px, transparent 2px) center / 8px 6px no-repeat, linear-gradient(#d0dcff, #b8ccf8);
}

.xp-v button svg {
    width: 9px;
    height: 6px;
    shape-rendering: auto;
}

.xp-h button svg {
    width: 6px;
    height: 9px;
    shape-rendering: auto;
}

.xp-v .end {
    margin-top: auto;
}

.xp-h .end {
    margin-left: auto;
}

/* Child windows */
.desktop {
    position: relative;
    flex: 1;
    overflow: hidden;
    background: #ece9d8;
}

.window {
    position: absolute;
    isolation: isolate;
    display: flex;
    flex-direction: column;
    padding: 0 4px 4px;
    background: #7480dc;
}

.win-hex {
    top: 170px;
    right: 2px;
    bottom: 0;
    left: 0;
}

.win-bosch {
    top: 1px;
    right: 2px;
    left: 0;
    height: 174px;
    border-radius: 7px 7px 0 0;
}

.win-map {
    top: 30px;
    left: 24px;
    width: 682px;
    height: 474px;
    padding: 0 3px 2px;
    border-radius: 7px 7px 0 0;
    background: #0a4ce0;
}

.caption {
    display: flex;
    align-items: center;
    gap: 2px;
    height: 30px;
    flex: none;
    margin: 0 -4px;
    padding: 2px 5px 0 6px;
    border-radius: 7px 7px 0 0;
    background: linear-gradient(#7088d8, #98b0f0 2px, #7a93df 7px, #7f9ae6 20px, #8aa4ec);
}

.caption h2 {
    padding-left: 1px;
}

.win-bosch h2 {
    color: #d8e4f8;
    text-shadow: none;
}

.win-bosch .cap {
    border-color: #c8d4f8;
    background: linear-gradient(135deg, #6c90ea, #4468d8);
}

.win-bosch .red {
    background: #b06a80;
}

.win-map .caption {
    height: 29px;
    margin: 0 -3px;
    padding: 2px 5px 0 4px;
    background: linear-gradient(#0048d8, #2878f8 2px, #0052e0 7px, #0058ee 18px, #0066ff 26px, #0050d8);
}

.doc {
    width: 16px;
    height: 16px;
}

.body {
    flex: 1;
    min-height: 0;
    display: grid;
    grid-template-columns: 1fr 16px;
    grid-template-rows: 1fr 16px;
    border: 2px solid #fff;
    border-top-color: #8c8c9c;
    border-left: 2px solid #8c8cc0;
}

.win-map .body {
    border-width: 2px 2px 2px 1px;
}

.view {
    width: 100%;
    height: 100%;
    min-width: 0;
    min-height: 0;
    overflow: hidden;
    margin: 0;
    background: #0000a0;
    color: #b8c4ff;
    font: 12px/14px "Liberation Mono", monospace;
}

.win-hex .view {
    padding-left: 7px;
}

.split {
    display: flex;
    justify-content: space-between;
    background: linear-gradient(#c8d0ff, #c8d0ff) 0 48px / 100% 1px no-repeat, linear-gradient(#c8d0ff, #c8d0ff) 0 50px / 100% 1px no-repeat #0000a0;
}

.split pre {
    margin: 0;
    padding-top: 1px;
    font: inherit;
}

.split pre:first-child {
    padding-top: 15px;
}

.split pre:last-child {
    width: 90px;
}

.vscroll {
    display: flex;
    flex-direction: column;
    background: #f6f5ee;
}

.vscroll button {
    width: 16px;
    height: 17px;
}

.thumb {
    background: #ece9d8;
    border: 1px solid #fff;
    border-right-color: #716f64;
    border-bottom-color: #716f64;
}

.vscroll .thumb {
    height: 35px;
    flex: none;
}

.vscroll .fill {
    flex: 1;
}

.track {
    flex: 1;
    background: #f6f5ee;
}

.tabs {
    display: flex;
    min-width: 0;
    background: #f6f5ee;
}

.tabs .thumb {
    flex: 1;
}

.tabs .arrow {
    width: 16px;
}

.tab {
    position: relative;
    width: 31px;
    height: 16px;
    margin-right: -6px;
    color: #c0c0c0;
    font: bold 12px/14px "DejaVu Sans Mono", monospace;
}

.tab.text {
    width: 46px;
}

.tab.on {
    z-index: 1;
    color: #fff;
}

.tab svg {
    position: absolute;
    inset: 0;
    width: 100%;
    height: 16px;
    shape-rendering: auto;
}

.tab span {
    position: relative;
    color: #000;
}

.tab + .raised,
.tab + .track {
    margin-left: 6px;
}

.corner {
    background: #c4c1c4;
}

/* 3d plot */
.plot text {
    fill: #c0ccff;
}

.scale,
.maf {
    text-anchor: end;
}

.maf,
.rpm {
    font-size: 11px;
}

.line {
    stroke: #b8c4ff;
}

.line:not([fill]) {
    fill: none;
}

.dash {
    fill: none;
    stroke: #5c5cf0;
    stroke-dasharray: 4 4;
}

.dot {
    fill: #b8c4ff;
}

.mark {
    fill: #303000;
    stroke: #ffff60;
}

.full {
    fill: #ffff60;
}

.tooltip {
    position: absolute;
    top: 496px;
    left: 239px;
    padding: 0 1px;
    border: 1px solid #000;
    background: #ffffe1;
    line-height: 15px;
    white-space: nowrap;
}

/* Status bar */
.status {
    display: flex;
    align-items: center;
    gap: 7px;
    height: 20px;
    flex: none;
    padding: 4px 0 0 1px;
    border-top: 1px solid #fff;
    white-space: nowrap;
}

.msg {
    flex: 1;
}

.st {
    width: 12px;
    height: 12px;
    shape-rendering: auto;
}

.hand {
    width: 16px;
    height: 12px;
}

.pane {
    height: 15px;
    padding-left: 1px;
    border-top: 1px solid #aca899;
    border-left: 1px solid #aca899;
    line-height: 13px;
}

.cs {
    width: 84px;
}

.ols {
    width: 83px;
}

.cursor {
    width: 295px;
    margin-left: -1px;
}

.taskbar {
    display: flex;
    height: 4px;
    flex: none;
    background: #2a78e8;
}

.taskbar i {
    width: 133px;
    background: #48a048;
}

.taskbar b {
    width: 75px;
    margin-left: auto;
    background: #18a8f0;
}
```
